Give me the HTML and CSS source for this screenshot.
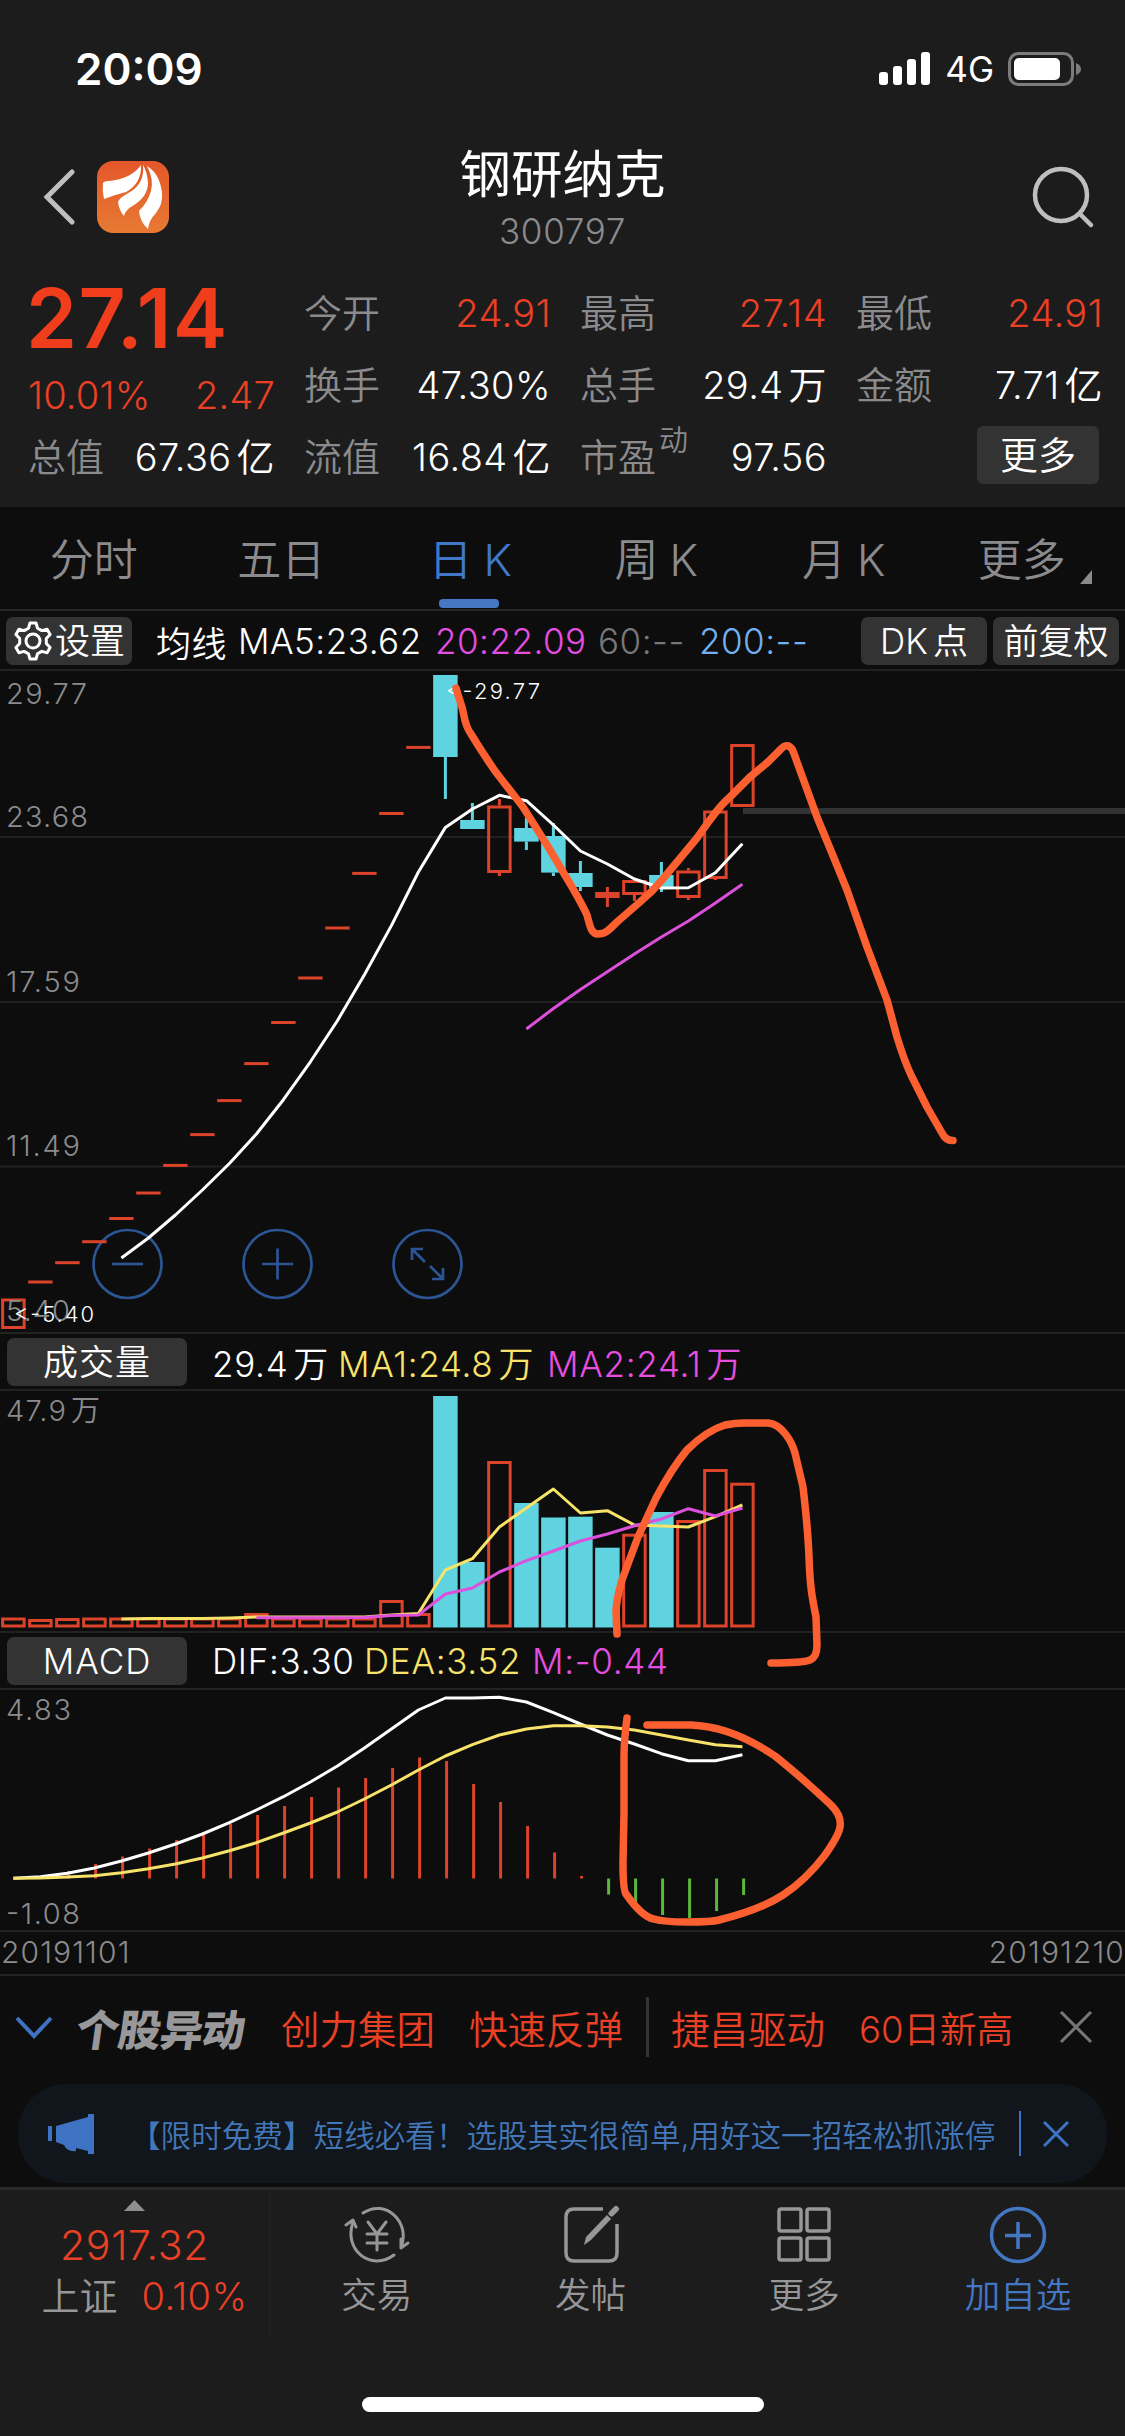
FILE: index.html
```
<!DOCTYPE html>
<html lang="zh-CN">
<head>
    <meta charset="UTF-8">
    <meta name="viewport" content="width=device-width, initial-scale=1.0">
    <title>钢研纳克 300797</title>
    <link rel="stylesheet" href="styles.css">
</head>
<body>
    <div class="status-bar">
        <span class="time">20:09</span>
        <div class="status-right">
            <svg class="signal" width="52" height="34" viewBox="0 0 52 34" fill="#fff">
                <rect x="0" y="20" width="9" height="13" rx="3"/>
                <rect x="14" y="14" width="9" height="19" rx="3"/>
                <rect x="28" y="7" width="9" height="26" rx="3"/>
                <rect x="42" y="0" width="9" height="33" rx="3"/>
            </svg>
            <span class="network">4G</span>
            <svg class="battery" width="74" height="34" viewBox="0 0 74 34">
                <rect x="1.5" y="1.5" width="63" height="31" rx="9" fill="none" stroke="#7c7c7c" stroke-width="3"/>
                <rect x="6" y="6" width="46" height="22" rx="5" fill="#fff"/>
                <path d="M68 11q5 2 5 6t-5 6z" fill="#7c7c7c"/>
            </svg>
        </div>
    </div>

    <header class="header">
        <div class="header-side">
            <svg width="32" height="56" viewBox="0 0 32 56"><path d="M29 3L4 28l25 25" fill="none" stroke="#bfbfbf" stroke-width="5" stroke-linecap="round"/></svg>
            <svg class="logo" width="72" height="72" viewBox="0 0 72 72">
                <defs>
                    <linearGradient id="logo-bg" x1="0" y1="0" x2="0" y2="1">
                        <stop offset="0" stop-color="#e4572a"/>
                        <stop offset="1" stop-color="#e77a33"/>
                    </linearGradient>
                </defs>
                <rect width="72" height="72" rx="16" fill="url(#logo-bg)"/>
                <g fill="#fff">
                    <path d="M6 22Q7 20 12 20Q34 18 44 4Q45 22 29 31Q17 34 7 38Q5 30 6 22Z"/>
                    <path d="M46 4Q48 22 33 31Q22 37 21 41Q22 49 27 55Q28 49 37 44Q51 35 51 22Q50 10 46 4Z"/>
                    <path d="M50 5Q57 18 54 30Q51 41 42 50Q43 61 51 68Q52 59 59 52Q66 43 65 32Q63 13 50 5Z"/>
                </g>
            </svg>
        </div>
        <div class="stock-title">
            <h1>钢研纳克</h1>
            <p>300797</p>
        </div>
        <div class="header-side search">
            <svg width="64" height="64" viewBox="0 0 64 64" fill="none" stroke="#bfbfbf" stroke-width="4.5" stroke-linecap="round"><circle cx="30" cy="29" r="26"/><path d="M49 48l11 11"/></svg>
        </div>
    </header>

    <section class="quote">
        <div class="quote-main">
            <p class="price">27.14</p>
            <div class="item change"><span>10.01%</span><span>2.47</span></div>
            <div class="item"><label>总值</label><b>67.36<i>亿</i></b></div>
        </div>
        <div class="quote-col">
            <div class="item"><label>今开</label><b class="red">24.91</b></div>
            <div class="item"><label>换手</label><b>47.30%</b></div>
            <div class="item"><label>流值</label><b>16.84<i>亿</i></b></div>
        </div>
        <div class="quote-col">
            <div class="item"><label>最高</label><b class="red">27.14</b></div>
            <div class="item"><label>总手</label><b>29.4<i>万</i></b></div>
            <div class="item"><label>市盈<sup>动</sup></label><b>97.56</b></div>
        </div>
        <div class="quote-col">
            <div class="item"><label>最低</label><b class="red">24.91</b></div>
            <div class="item"><label>金额</label><b>7.71<i>亿</i></b></div>
            <div class="item end"><button class="more-btn">更多</button></div>
        </div>
    </section>

    <nav class="tabs">
        <a>分时</a>
        <a>五日</a>
        <a class="active">日<i>K</i></a>
        <a>周<i>K</i></a>
        <a>月<i>K</i></a>
        <a class="more">更多<svg width="12" height="14" viewBox="0 0 12 14"><path d="M12 0v14H0z" fill="#8b8b8d"/></svg></a>
    </nav>

    <main class="charts">
        <div class="ma-bar">
            <button class="chip settings">
                <svg width="40" height="40" viewBox="0 0 40 40" fill="none" stroke="#fff" stroke-width="3" stroke-linejoin="round">
                    <path d="M17 2h6l1.500 5.200 4.300 2.400 5.300-1.300 3 5.200-3.800 4v5l3.800 4-3 5.200-5.300-1.300-4.300 2.400L23 38h-6l-1.500-5.200-4.300-2.400-5.300 1.300-3-5.200 3.800-4v-5l-3.800-4 3-5.200 5.300 1.300 4.300-2.400z"/>
                    <circle cx="20" cy="20" r="7"/>
                </svg>设置
            </button>
            <span class="ma-name">均线</span>
            <span class="ma5">MA5:23.62</span>
            <span class="pink ma20">20:22.09</span>
            <span class="gray ma60">60:--</span>
            <span class="blue ma200">200:--</span>
            <div class="ma-right">
                <button class="chip">DK<i>点</i></button>
                <button class="chip">前复权</button>
            </div>
        </div>

        <svg class="price-chart" viewBox="0 671 1125 661">
            <path class="grid" d="M0 837H1125M0 1002H1125M0 1166.500H1125"/>
            <rect x="743" y="808" width="382" height="6" fill="#333"/>
            <g id="zoom-btns" class="zoom-btns">
                <circle cx="127.500" cy="1264" r="34"/><path d="M112 1264h31"/>
                <circle cx="277.500" cy="1264" r="34"/><path d="M262 1264h31M277.500 1248.500v31"/>
                <circle cx="427.500" cy="1264" r="34"/>
                <path d="M412 1260v-11h11M412 1249l13 13M443 1268v11h-11M443 1279l-13-13"/>
            </g>
            <g id="candles"></g>
            <g class="axis">
                <text x="6" y="704" textLength="81">29.77</text>
                <text x="6" y="827" textLength="82">23.68</text>
                <text x="6" y="992" textLength="74">17.59</text>
                <text x="6" y="1156" textLength="74">11.49</text>
                <text x="6" y="1320.500" textLength="64">5.40</text>
            </g>
            <g class="mark">
                <text x="446" y="699" textLength="94">&lt;-29.77</text>
                <text x="14" y="1321.500" textLength="80">&lt;-5.40</text>
            </g>
        </svg>

        <div class="sub-bar">
            <button class="chip wide">成交量</button>
            <span class="v1">29.4<i>万</i></span>
            <span class="yellow v2">MA1:24.8<i>万</i></span>
            <span class="pink v2">MA2:24.1<i>万</i></span>
        </div>
        <svg class="sub-chart" viewBox="0 1391 1125 240">
            <g id="volume"></g>
            <g class="axis"><text x="6" y="1420.500" textLength="60">47.9</text><text x="71" y="1420.500">万</text></g>
        </svg>

        <div class="sub-bar">
            <button class="chip wide">MACD</button>
            <span class="m1">DIF:3.30</span>
            <span class="yellow m2">DEA:3.52</span>
            <span class="pink m3">M:-0.44</span>
        </div>
        <svg class="sub-chart" viewBox="0 1690 1125 240">
            <g id="macd"></g>
            <g class="axis">
                <text x="6" y="1720" textLength="65">4.83</text>
                <text x="6" y="1924" textLength="74">-1.08</text>
            </g>
        </svg>
        <div class="dates"><span>20191101</span><span>20191210</span></div>

        <!-- hand-drawn marks over all three charts -->
        <svg class="drawing" viewBox="0 611 1125 1364">
            <path d="M456 688C460 703 462 704 464 716Q466 727 471 734Q482 752 495 771L523 807L547 845L572 887Q583 906 587 915C590 926 591 934 598 934C605 934 608 931 617 922L640 902Q652 892 662 880L697 838C710 820 718 807 729 798L750 777L768 762L780 750Q787 742 792 749Q794 753 797 762L817 817Q832 853 847 890L867 947L887 1000L897 1037Q904 1060 911 1075L927 1107L942 1133Q946 1141 953 1140.500"/>
            <path d="M617 1634L616 1610Q617 1597 622 1580L638 1537L656 1498Q672 1468 687 1450C698 1439 712 1429 725 1425Q735 1423 744 1423H768C782 1424 792 1442 795 1453L803 1487Q808 1530 809 1557C810 1587 812 1597 816 1617L817 1645Q817 1657 810 1660Q802 1663 771 1663"/>
            <path d="M627 1718Q624 1740 624 1757V1813L623 1863Q623 1890 626 1894Q642 1917 654 1919Q664 1922 687 1922Q711 1922 719 1920Q760 1910 783 1895Q806 1880 825 1855Q839 1835 840 1827Q842 1816 831 1805Q800 1776 775 1756C747 1737 720 1726 691 1725H647"/>
        </svg>
    </main>

    <section class="news">
        <svg width="40" height="24" viewBox="0 0 40 24"><path d="M3 3l17 18L37 3" fill="none" stroke="#3d73c2" stroke-width="4"/></svg>
        <strong>个股异动</strong>
        <span>创力集团</span>
        <span>快速反弹</span>
        <hr>
        <span>捷昌驱动</span>
        <span class="high">60日新高</span>
        <svg class="close" width="34" height="34" viewBox="0 0 34 34"><path d="M2 2l30 30M32 2L2 32" stroke="#77777a" stroke-width="3"/></svg>
    </section>

    <div class="banner">
        <svg width="46" height="40" viewBox="0 0 46 40" fill="#3d73c2"><path d="M0 12h4v15H0zM8 12L40 3V0h6v40h-6v-3l-12-3v3q-9 1-12-6L8 28z"/></svg>
        <p>【限时免费】短线必看！选股其实很简单,用好这一招轻松抓涨停</p>
        <hr>
        <svg width="26" height="26" viewBox="0 0 26 26"><path d="M1 1l24 24M25 1L1 25" stroke="#3d73c2" stroke-width="3"/></svg>
    </div>

    <footer class="footer">
        <div class="index">
            <svg width="21" height="11" viewBox="0 0 21 11"><path d="M10.500 0L21 11H0z" fill="#8e8e90"/></svg>
            <p class="index-value">2917.32</p>
            <p class="index-name">上证<span>0.10%</span></p>
        </div>
        <a>
            <svg width="66" height="60" viewBox="0 0 66 60" fill="none" stroke="#97979a" stroke-width="3" stroke-linecap="round">
                <path d="M19 8C42-7 67 18 57 42M50 50C27 67-1 45 9 17M64 38l-7 5v-9M2 20l7-5 3 7" stroke-linejoin="round"/>
                <path d="M24 17l9 12 9-12M33 29v16M23 29h20M23 38h20"/>
            </svg>
            交易
        </a>
        <a>
            <svg width="60" height="60" viewBox="0 0 60 60" fill="none" stroke="#97979a" stroke-width="3.500">
                <path d="M42 4H13Q5 4 5 12V48Q5 56 13 56H48Q56 56 56 48V19"/>
                <path d="M23 40l2-8L46 10l4 4L30 35z" fill="#97979a" stroke="none"/><path d="M50.500 8.500L55 4" stroke-width="6" stroke-linecap="round"/>
            </svg>
            发帖
        </a>
        <a>
            <svg width="60" height="60" viewBox="0 0 60 60" fill="none" stroke="#97979a" stroke-width="3.500">
                <rect x="5" y="4" width="22" height="22" rx="2"/><rect x="33" y="4" width="22" height="22" rx="2"/>
                <rect x="5" y="33" width="22" height="22" rx="2"/><rect x="33" y="33" width="22" height="22" rx="2"/>
            </svg>
            更多
        </a>
        <a class="add">
            <svg width="60" height="60" viewBox="0 0 60 60" fill="none" stroke="#4377c4" stroke-width="3.500"><circle cx="30" cy="30" r="26.500"/><path d="M30 17v27M17 30.500h26"/></svg>
            加自选
        </a>
    </footer>
    <div class="home-indicator"></div>
    <script src="chart.js"></script>
</body>
</html>
```
FILE: styles.css
```
* {
    margin: 0;
    padding: 0;
    box-sizing: border-box;
}

body {
    width: 1125px;
    height: 2436px;
    overflow: hidden;
    display: flex;
    flex-direction: column;
    background: #0d0d0d;
    color: #fff;
    font-family: Inter, "Noto Sans CJK SC", sans-serif;
    font-weight: 350;
}

i {
    font-style: normal;
    margin-left: 5px;
}

button {
    border: none;
    color: #fff;
    font-family: inherit;
    font-weight: inherit;
}

svg {
    display: block;
    flex: none;
}

.red {
    color: #ea4025;
}

.pink {
    color: #e54fe0;
}

.yellow {
    color: #f7e36a;
}

.gray {
    color: #77777a;
}

.blue {
    color: #72b0f2;
}

/* status bar and title */
.status-bar {
    height: 138px;
    padding: 0 43px 0 75px;
    display: flex;
    align-items: center;
    justify-content: space-between;
    background: #1c1c1c;
}

.time {
    font-size: 44px;
    font-weight: 600;
}

.status-right {
    display: flex;
    align-items: center;
    gap: 14px;
}

.network {
    font-size: 35px;
    font-weight: 400;
}

.header {
    height: 132px;
    padding: 0 30px 0 43px;
    display: flex;
    justify-content: space-between;
    background: #1c1c1c;
}

.header-side {
    width: 230px;
    height: 118px;
    display: flex;
    align-items: center;
    gap: 22px;
}

.search {
    padding-top: 2px;
    justify-content: flex-end;
}

.stock-title {
    padding-top: 2px;
    text-align: center;
    margin-right: 13px;
}

.stock-title h1 {
    font-size: 51.5px;
    line-height: 68px;
    font-weight: 400;
}

.stock-title p {
    font-size: 35px;
    line-height: 47px;
    letter-spacing: 0.7px;
    color: #8b8b8d;
}

/* quote */
.quote {
    height: 237px;
    padding: 7px 22px 0 28px;
    display: grid;
    grid-template-columns: repeat(4, 247px);
    column-gap: 29px;
    background: #1c1c1c;
}

.item {
    height: 72px;
    display: flex;
    justify-content: space-between;
    align-items: center;
    font-size: 38px;
    line-height: 72px;
}

.item label {
    color: #8b8b8d;
    white-space: nowrap;
}

.item b {
    font-weight: inherit;
    letter-spacing: 0.4px;
}

.item sup {
    font-size: 29px;
    line-height: 0;
    position: relative;
    top: -6px;
    margin-left: 3px;
}

.item.end {
    justify-content: flex-end;
    padding: 0 4px 4px 0;
}

.price {
    height: 84px;
    font-size: 82px;
    line-height: 84px;
    font-weight: 600;
    color: #f03d1c;
    letter-spacing: 1.3px;
    margin-left: -2px;
}

.change {
    height: 60px;
    padding-top: 8px;
    color: #ea4025;
    letter-spacing: 0.2px;
}

.more-btn {
    width: 122px;
    height: 58px;
    border-radius: 6px;
    background: #333;
    font-size: 38px;
    line-height: 54px;
}

/* period tabs */
.tabs {
    height: 104px;
    display: grid;
    grid-template-columns: repeat(6, 1fr);
    border-bottom: 2px solid #262626;
}

.tabs a {
    position: relative;
    padding-top: 1px;
    text-align: center;
    font-size: 44px;
    line-height: 105px;
    color: #8b8b8d;
}

.tabs i {
    margin-left: 11px;
}

.tabs .active {
    padding-left: 3px;
    color: #3f77c9;
}

.tabs .active::after {
    content: "";
    position: absolute;
    left: 64px;
    bottom: 5px;
    width: 60px;
    height: 9px;
    border-radius: 4px;
    background: #4677c2;
}

.tabs .more {
    padding-right: 19px;
}

.tabs .more svg {
    position: absolute;
    right: 33px;
    bottom: 29px;
}

/* charts */
.charts {
    position: relative;
}

.ma-bar,
.sub-bar {
    display: flex;
    align-items: center;
    border-bottom: 2px solid #222;
    font-size: 35px;
    white-space: nowrap;
}

.ma-bar {
    height: 60px;
    padding: 2px 6px 0;
    letter-spacing: 0.5px;
}

.sub-bar {
    height: 59px;
    padding: 0 7px;
    border-top: 2px solid #222;
    letter-spacing: 0.7px;
}

.chip {
    width: 126px;
    height: 48px;
    border-radius: 7px;
    background: #333;
    font-size: 35px;
    line-height: 44px;
    display: flex;
    align-items: center;
    justify-content: center;
    white-space: nowrap;
}

.wide {
    width: 180px;
    margin-right: 25px;
    letter-spacing: 1px;
}

.settings {
    gap: 2px;
}

.ma-name {
    margin-left: 24px;
    width: 82px;
}

.ma5 { width: 197px; }
.ma20 { width: 163px; }
.ma60 { width: 101px; }
.v1 { width: 126px; }
.v2 { width: 209px; }
.m1 { width: 152px; }
.m2 { width: 168px; }

.ma-right {
    margin-left: auto;
    display: flex;
    gap: 6px;
}

.price-chart {
    width: 1125px;
    height: 661px;
}

.sub-chart {
    width: 1125px;
    height: 240px;
    overflow: visible;
}

.grid {
    stroke: #212121;
    stroke-width: 2;
}

.zoom-btns {
    fill: none;
    stroke: #2b5594;
    stroke-width: 2.7;
}

.axis {
    fill: #8b8b8d;
    font-size: 29px;
}

.mark {
    fill: #fff;
    font-size: 22px;
}

.dates {
    height: 46px;
    padding: 0 0 3px 1px;
    display: flex;
    justify-content: space-between;
    align-items: center;
    border-top: 2px solid #222;
    border-bottom: 2px solid #222;
    font-size: 30px;
    letter-spacing: 1.1px;
    color: #8b8b8d;
}

.up {
    fill: none;
    stroke: #dc432a;
    stroke-width: 3;
}

.down {
    fill: #5fd3e0;
    stroke: #5fd3e0;
    stroke-width: 3;
}

.bar-down {
    fill: #5fd3e0;
}

.green {
    stroke: #5cb83c;
    stroke-width: 3;
}

.line {
    fill: none;
    stroke-width: 3;
    stroke-linejoin: round;
}

.line.white { stroke: #fff; }
.line.yellow { stroke: #f7e36a; }
.line.pink { stroke: #dd50dc; }

.drawing {
    position: absolute;
    top: 0;
    left: 0;
    width: 1125px;
    height: 1364px;
    fill: none;
    stroke: #fc6030;
    stroke-width: 7.5;
    stroke-linecap: round;
    stroke-linejoin: round;
}

/* news */
.news {
    height: 108px;
    padding: 0 32px 6px 14px;
    display: flex;
    align-items: center;
    font-size: 38.5px;
    color: #ea4025;
    white-space: nowrap;
}

.news strong {
    margin: 0 38px 0 23px;
    width: 166px;
    font-size: 43px;
    font-weight: 900;
    letter-spacing: -1px;
    color: #98989a;
    transform: skewX(-8deg);
}

.news span {
    width: 154px;
    margin-right: 34px;
}

.news hr {
    width: 3px;
    height: 60px;
    margin: 0 22px 0 -11px;
    border: none;
    background: #333;
}

.news .high {
    font-size: 36.5px;
    margin: 0;
}

.close {
    margin-left: auto;
}

.banner {
    height: 99px;
    margin: 0 18px;
    padding: 0 38px 0 30px;
    display: flex;
    align-items: center;
    border-radius: 48px;
    background: #10161c;
}

.banner p {
    margin-left: 36px;
    font-size: 30.6px;
    color: #4377b8;
    white-space: nowrap;
}

.banner hr {
    width: 2px;
    height: 45px;
    margin: 0 22px 0 auto;
    border: none;
    background: #3d73c2;
}

/* bottom bar */
.footer {
    flex: 1;
    margin-top: 4px;
    display: grid;
    grid-template-columns: 270px repeat(4, 213.75px);
    border-top: 3px solid #2a2a2b;
    background: #1c1c1c;
    color: #97979a;
}

.index {
    height: 146px;
    padding-top: 10px;
    display: flex;
    flex-direction: column;
    align-items: center;
    border-right: 1px solid #232323;
}

.index-value {
    margin-top: 9px;
    font-size: 41px;
    line-height: 51px;
    letter-spacing: 0.7px;
    color: #ea4025;
}

.index-name {
    padding-left: 20px;
    font-size: 38px;
    line-height: 51px;
}

.index-name span {
    margin-left: 24px;
    letter-spacing: 0.4px;
    color: #ea4025;
}

.footer a {
    padding-top: 15px;
    display: flex;
    flex-direction: column;
    align-items: center;
    gap: 6px;
    font-size: 35.5px;
    line-height: 50px;
}

.footer .add {
    color: #4377c4;
}

.home-indicator {
    position: absolute;
    left: 362px;
    top: 2397px;
    width: 402px;
    height: 15px;
    border-radius: 8px;
    background: #fff;
}
```
FILE: chart.js
```
const STEP = 27;
const FIRST_X = 13.4;
const BAR_W = 24.5;

const x = (i) => FIRST_X + i * STEP;

// [up?, body top, body bottom, wick top, wick bottom]
const candles = [
    [1, 1298.5, 1329, 0, 0],
    [1, 1282], [1, 1262.7], [1, 1241.7], [1, 1218.5], [1, 1193],
    [1, 1165.4], [1, 1134.6], [1, 1100.6], [1, 1063.6], [1, 1022.5],
    [1, 978], [1, 928], [1, 873.4], [1, 813.5], [1, 747.4],
    [0, 675, 757, 675, 799],
    [0, 820, 829, 803, 829],
    [1, 805.5, 873, 799, 876],
    [0, 828, 841.6, 818, 850],
    [0, 836, 872.6, 823, 876],
    [0, 873, 887, 861, 891],
    [1, 892, 898, 887, 907],
    [1, 880, 895, 880, 901],
    [0, 875, 888, 862, 892],
    [1, 870.5, 898, 868, 900],
    [1, 810.5, 879, 810.5, 880],
    [1, 744, 807, 0, 0]
];

const ma5 = [1258, 1238, 1215, 1190, 1163.5, 1134, 1099.7, 1061.8, 1020.7, 974.7, 925.6, 872,
    827.4, 809, 795.3, 800.7, 825, 851, 864, 879, 888, 887.7, 872.7, 843.7];
const ma20 = [1029, 1008.5, 989.5, 971.7, 954, 937, 921, 903, 884.3];

const VOL_BASE = 1627.5;
const volume = [1617.5, 1619, 1618, 1617.5, 1617.5, 1617.5, 1617.5, 1617.5, 1617.5, 1613, 1617.5, 1617.5,
    1617.5, 1617.5, 1600, 1613, 1396, 1562, 1461, 1503, 1517.5, 1516.7, 1547.7, 1533.7, 1512, 1520, 1469, 1482.7];
const volumeDown = [16, 17, 19, 20, 21, 22, 24];
const volMa1 = [1619, 1618.5, 1618.5, 1618.5, 1618, 1617, 1617, 1617, 1617, 1617, 1615, 1613.5, 1570, 1558.7,
    1527, 1508, 1489, 1513, 1510.7, 1525, 1526, 1527, 1516.7, 1505];
const volMa2 = [1617.7, 1617.7, 1617.7, 1617.7, 1617.5, 1615.5, 1615, 1594, 1588, 1572, 1560.7, 1551, 1541,
    1534, 1525.7, 1519, 1508.7, 1516, 1508];

const MACD_BASE = 1878.5;
const macd = [0, 0, 1871, 1864, 1856.5, 1848.5, 1840, 1832, 1824, 1815, 1806, 1797, 1787.5, 1778, 1768,
    1757.5, 1761, 1784, 1802, 1826, 1852.5, 1876, 1894.5, 1902, 1915, 1918, 1911, 1895];
const dif = [1878.3, 1876.7, 1873.3, 1868, 1861, 1853, 1844, 1834, 1822.7, 1810, 1796.7, 1782, 1766, 1748,
    1729, 1710, 1698, 1698, 1697.3, 1702, 1712.7, 1724, 1735, 1744, 1753.7, 1760.7, 1760.7, 1754.7];
const dea = [1878.3, 1878, 1877, 1875.7, 1872.7, 1868.7, 1864, 1858, 1850.7, 1842.7, 1833, 1823, 1812, 1799,
    1785, 1770, 1756, 1744.7, 1735, 1729, 1725.7, 1725.7, 1727, 1730, 1735, 1740, 1744.7, 1746.7];

function line(values, start, cls) {
    const points = values.map((y, i) => `${x(start + i)},${y}`).join(" ");
    return `<polyline class="line ${cls}" points="${points}"/>`;
}

function box(i, top, bottom, up) {
    const left = x(i) - BAR_W / 2;
    if (up) {
        return `<rect class="up" x="${left + 1.5}" y="${top + 1.5}" width="${BAR_W - 3}" height="${bottom - top - 3}"/>`;
    }
    return `<rect class="bar-down" x="${left}" y="${top}" width="${BAR_W}" height="${bottom - top}"/>`;
}

function drawCandles() {
    let html = "";
    candles.forEach(([up, top, bottom, high, low], i) => {
        const cls = up ? "up" : "down";
        if (bottom === undefined) {
            html += `<path class="up" d="M${x(i) - 12.2} ${top}h24.4"/>`;
            return;
        }
        html += box(i, top, bottom, up);
        if (high) {
            html += `<path class="${cls}" d="M${x(i)} ${high}V${top}M${x(i)} ${bottom}V${low}"/>`;
        }
    });
    html += line(ma5, 4, "white") + line(ma20, 19, "pink");
    document.getElementById("candles").innerHTML = html;
}

function drawVolume() {
    let html = volume.map((top, i) => box(i, top, VOL_BASE, !volumeDown.includes(i))).join("");
    html += line(volMa1, 4, "yellow") + line(volMa2, 9, "pink");
    document.getElementById("volume").innerHTML = html;
}

function drawMacd() {
    let html = "";
    macd.forEach((end, i) => {
        if (end) {
            html += `<path class="${end < MACD_BASE ? "up" : "green"}" d="M${x(i) + 1.2} ${MACD_BASE}V${end}"/>`;
        }
    });
    html += line(dif, 0, "white") + line(dea, 0, "yellow");
    document.getElementById("macd").innerHTML = html;
}

drawCandles();
drawVolume();
drawMacd();
```
